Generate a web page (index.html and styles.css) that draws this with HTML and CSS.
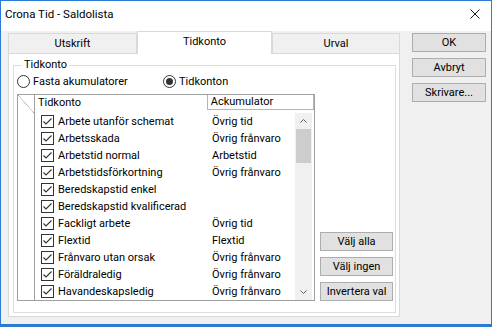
FILE: index.html
```html
<!DOCTYPE html>
<html lang="sv">
<head>
    <meta charset="UTF-8">
    <title>Crona Tid - Saldolista</title>
    <link rel="stylesheet" href="styles.css">
</head>
<body>
    <div class="window">
        <div class="titlebar">
            <span class="title">Crona Tid - Saldolista</span>
            <svg class="close" width="10" height="10" viewBox="0 0 10 10">
                <path d="M0.5 0.5 L9.5 9.5 M9.5 0.5 L0.5 9.5" stroke="#1a1a1a" stroke-width="1" fill="none"/>
            </svg>
        </div>

        <div class="client">
            <div class="tabs">
                <div class="tab-strip">
                    <div class="tab tab-first">Utskrift</div>
                    <div class="tab active">Tidkonto</div>
                    <div class="tab tab-last">Urval</div>
                </div>

                <div class="tab-panel">
                    <fieldset class="group">
                        <legend>Tidkonto</legend>

                        <div class="radios">
                            <div class="radio"><span class="dot"></span>Fasta akumulatorer</div>
                            <div class="radio checked"><span class="dot"></span>Tidkonton</div>
                        </div>

                        <div class="group-body">
                            <div class="list">
                                <div class="list-head">
                                    <div class="corner"></div>
                                    <div class="head-name">Tidkonto</div>
                                    <div class="head-acc">Ackumulator</div>
                                </div>
                                <div class="list-body">
                                    <div class="gutter"></div>
                                    <div class="rows" id="rows"></div>
                                    <div class="scrollbar">
                                        <svg class="arrow" width="7" height="4" viewBox="0 0 7 4"><path d="M0.5 3.5 L3.5 0.5 L6.5 3.5" stroke="#606060" fill="none"/></svg>
                                        <div class="track"><div class="thumb"></div></div>
                                        <svg class="arrow" width="7" height="4" viewBox="0 0 7 4"><path d="M0.5 0.5 L3.5 3.5 L6.5 0.5" stroke="#606060" fill="none"/></svg>
                                    </div>
                                </div>
                            </div>

                            <div class="list-actions">
                                <button class="btn">Välj alla</button>
                                <button class="btn">Välj ingen</button>
                                <button class="btn">Invertera val</button>
                            </div>
                        </div>
                    </fieldset>
                </div>
            </div>

            <div class="dialog-buttons">
                <button class="btn">OK</button>
                <button class="btn">Avbryt</button>
                <button class="btn">Skrivare...</button>
            </div>
        </div>
    </div>

    <script>
        const accounts = [
            ['Arbete utanför schemat', 'Övrig tid'],
            ['Arbetsskada', 'Övrig frånvaro'],
            ['Arbetstid normal', 'Arbetstid'],
            ['Arbetstidsförkortning', 'Övrig frånvaro'],
            ['Beredskapstid enkel', ''],
            ['Beredskapstid kvalificerad', ''],
            ['Fackligt arbete', 'Övrig tid'],
            ['Flextid', 'Flextid'],
            ['Frånvaro utan orsak', 'Övrig frånvaro'],
            ['Föräldraledig', 'Övrig frånvaro'],
            ['Havandeskapsledig', 'Övrig frånvaro']
        ];

        const rows = document.getElementById('rows');
        const check = '<svg width="13" height="13" viewBox="0 0 13 13"><path d="M2.5 6.5 L5 9 L10.5 3.5" stroke="#333" stroke-width="1.1" fill="none"/></svg>';

        accounts.forEach(([name, acc]) => {
            const row = document.createElement('div');
            row.className = 'row';
            row.innerHTML = `<div class="cell-name"><span class="checkbox">${check}</span>${name}</div><div class="cell-acc">${acc}</div>`;
            rows.appendChild(row);
        });
    </script>
</body>
</html>
```

FILE: styles.css
```css
html, body {
    margin: 0;
    padding: 0;
    width: 492px;
    height: 327px;
    overflow: hidden;
}

body {
    font-family: Roboto, "Liberation Sans", sans-serif;
    font-size: 11px;
    color: #000;
}

.window {
    box-sizing: border-box;
    width: 492px;
    height: 327px;
    border: 1px solid #2b7ad3;
    border-bottom-width: 3px;
    background: #f0f0f0;
    display: flex;
    flex-direction: column;
}

.titlebar {
    height: 30px;
    background: #fff;
    display: flex;
    align-items: center;
    justify-content: space-between;
    padding: 0 11px 4px 4px;
    box-sizing: border-box;
    font-size: 11.5px;
}

.client {
    display: flex;
    padding-left: 7px;
}

/* tab control */
.tabs {
    width: 392px;
}

.tab-strip {
    display: flex;
    align-items: flex-end;
    height: 22px;
}

.tab {
    box-sizing: border-box;
    height: 20px;
    line-height: 19px;
    text-align: center;
    background: #f0f0f0;
    border: 1px solid #d9d9d9;
    border-bottom: none;
}

.tab-first {
    width: 129px;
}

.tab-last {
    width: 128px;
}

.tab.active {
    width: 135px;
    height: 23px;
    line-height: 20px;
    background: #fff;
    position: relative;
    z-index: 1;
    margin-bottom: -1px;
}

.tab-panel {
    box-sizing: border-box;
    height: 264px;
    background: #fff;
    border: 1px solid #d9d9d9;
    padding: 3px 3px 3px 4px;
}

/* group box */
.group {
    margin: 0;
    height: 100%;
    box-sizing: border-box;
    border: 1px solid #dcdcdc;
    padding: 1px 1px 4px 3px;
}

.group legend {
    padding: 0 2px;
    margin-left: 5px;
    line-height: 16px;
}

.radios {
    display: flex;
    height: 15px;
    align-items: center;
    margin-bottom: 5px;
}

.radio {
    display: flex;
    align-items: center;
    width: 146px;
}

.dot {
    box-sizing: border-box;
    width: 13px;
    height: 13px;
    border: 1px solid #333;
    border-radius: 50%;
    background: #fff;
    margin-right: 3px;
    display: flex;
    align-items: center;
    justify-content: center;
}

.checked .dot::after {
    content: "";
    width: 7px;
    height: 7px;
    border-radius: 50%;
    background: #333;
}

.group-body {
    display: flex;
    align-items: flex-end;
}

/* list view */
.list {
    box-sizing: border-box;
    width: 298px;
    height: 207px;
    border: 1px solid #a0a0a0;
    background: #fff;
    display: flex;
    flex-direction: column;
}

.list-head {
    display: flex;
    height: 18px;
    flex-shrink: 0;
}

.corner {
    width: 16px;
    border-right: 1px solid #a0a0a0;
    background: linear-gradient(to bottom left, transparent calc(50% - 0.5px), #a0a0a0 50%, transparent calc(50% + 0.5px));
}

.head-name {
    width: 170px;
    padding-left: 3px;
    line-height: 15px;
}

.head-acc {
    box-sizing: border-box;
    width: 108px;
    height: 15px;
    line-height: 14px;
    border: 1px solid #b4b4b4;
    border-top: none;
    padding-left: 3px;
}

.list-body {
    display: flex;
    flex: 1;
}

.gutter {
    width: 16px;
    border-right: 1px solid #a0a0a0;
}

.rows {
    flex: 1;
}

.row {
    display: flex;
    height: 17px;
    align-items: center;
}

.cell-name {
    width: 171px;
    display: flex;
    align-items: center;
    padding-left: 6px;
    white-space: nowrap;
}

.cell-acc {
    white-space: nowrap;
}

.checkbox {
    box-sizing: border-box;
    width: 13px;
    height: 13px;
    border: 1px solid #333;
    margin-right: 4px;
    display: flex;
}

.checkbox svg {
    margin: -1px;
}

.scrollbar {
    width: 17px;
    background: #f0f0f0;
    display: flex;
    flex-direction: column;
    align-items: center;
    margin-right: 2px;
}

.scrollbar .arrow {
    margin: 6px 0;
}

.track {
    flex: 1;
    width: 100%;
}

.thumb {
    width: 15px;
    height: 34px;
    margin: 0 auto;
    background: #cdcdcd;
}

.list-actions {
    display: flex;
    flex-direction: column;
    gap: 6px;
    margin-left: 5px;
}

/* buttons */
.btn {
    box-sizing: border-box;
    width: 73px;
    height: 19px;
    padding: 0;
    font-family: inherit;
    font-size: 11px;
    line-height: 16px;
    color: #000;
    background: #e1e1e1;
    border: 1px solid #adadad;
    border-radius: 0;
}

.dialog-buttons {
    display: flex;
    flex-direction: column;
    gap: 6px;
    margin-left: 12px;
    padding-top: 2px;
}

.dialog-buttons .btn {
    width: 74px;
}
```
